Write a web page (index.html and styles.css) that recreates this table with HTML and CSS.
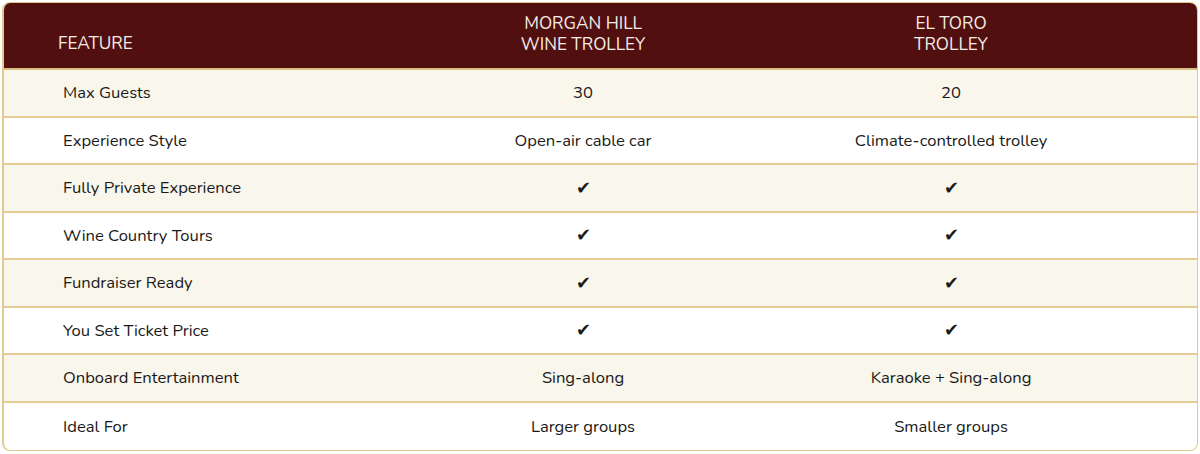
FILE: index.html
```html
<!DOCTYPE html>
<html>
<head>
<meta charset="utf-8">
<link rel="stylesheet" href="styles.css">
</head>
<body>
<div class="wrap">
<table class="cmp">
<colgroup><col class="c1"><col class="c2"><col class="c3"></colgroup>
<thead>
<tr><th class="feat"><div class="hfeat">Feature</div></th><th><div class="hcol"><span class="ln">Morgan Hill</span><span class="ln">Wine Trolley</span></div></th><th><div class="hcol"><span class="ln">El Toro</span><span class="ln">Trolley</span></div></th></tr>
</thead>
<tbody>
<tr><td>Max Guests</td><td>30</td><td>20</td></tr>
<tr><td>Experience Style</td><td>Open-air cable car</td><td>Climate-controlled trolley</td></tr>
<tr><td>Fully Private Experience</td><td class="chk">✔</td><td class="chk">✔</td></tr>
<tr><td>Wine Country Tours</td><td class="chk">✔</td><td class="chk">✔</td></tr>
<tr><td>Fundraiser Ready</td><td class="chk">✔</td><td class="chk">✔</td></tr>
<tr><td>You Set Ticket Price</td><td class="chk">✔</td><td class="chk">✔</td></tr>
<tr><td>Onboard Entertainment</td><td>Sing-along</td><td>Karaoke + Sing-along</td></tr>
<tr><td>Ideal For</td><td>Larger groups</td><td>Smaller groups</td></tr>
</tbody>
</table>
</div>
</body>
</html>
```
FILE: styles.css
```css
html, body { margin: 0; padding: 0; background: #fff; }
body { font-family: "Nunito", "Lato", "Noto Sans", sans-serif; color: #1a1a1a; }
.wrap { padding: 2px 2px 0 2px; }
.cmp {
  width: 1196px;
  border-collapse: separate;
  border-spacing: 0;
  border: 1px solid #e3c98f;
  border-left-width: 2px;
  border-radius: 8px;
  overflow: hidden;
  font-size: 16.6px;
  table-layout: fixed;
}
.c1 { width: 457px; }
.c2 { width: 244px; }
.c3 { width: 492px; }
.cmp th {
  background: #520f10;
  color: #f5ede6;
  font-weight: 400;
  font-size: 17.2px;
  text-transform: uppercase;
  height: 65px;
  padding: 0;
  line-height: 21px;
  vertical-align: middle;
  border-bottom: 2px solid #d9bd82;
  text-align: center;
}
.ln { display: block; }
.hcol { padding-bottom: 4px; }
.cmp th.feat { text-align: left; padding-left: 54px; }
.hfeat { padding-top: 16px; }
.cmp td {
  height: 45.5px;
  padding: 0;
  text-align: center;
  border-bottom: 2px solid #e5cb94;
}
.cmp td:first-child { text-align: left; padding-left: 59px; }
.cmp td.chk { font-size: 18px; line-height: 1; }
.cmp tbody tr:nth-child(odd) td { background: #f9f6ec; }
.cmp tbody tr:last-child td { border-bottom: 0; height: 47.5px; }
```
